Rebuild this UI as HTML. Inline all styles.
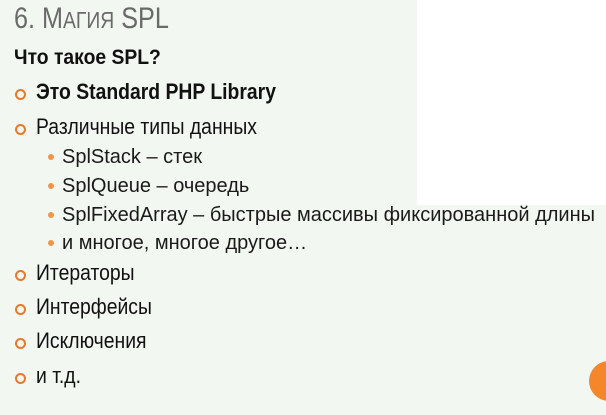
<!DOCTYPE html>
<html><head><meta charset="utf-8"><style>
html,body{margin:0;padding:0}
body{width:606px;height:415px;background:#f3f7f2;position:relative;overflow:hidden;font-family:"Liberation Sans","DejaVu Sans",sans-serif;color:#111}
.w{position:absolute;left:417px;top:0;width:189px;height:205px;background:#fff}
.l{position:absolute;white-space:nowrap;line-height:1;transform-origin:0 50%}
.t{left:14px;top:4px;font-size:30px;color:#6a6a6a;transform:scaleX(0.84)}
.t small{font-size:23px}
.h{left:14px;top:47px;font-size:21px;font-weight:bold;transform:scaleX(0.92)}
.i{left:36px;font-size:22px}
.i span{display:inline-block;transform:scaleX(0.88);transform-origin:0 50%}
.i:before{content:"";position:absolute;left:-21px;top:8px;width:7px;height:7px;border:2px solid #e8782a;border-radius:50%}
.s{left:62px;font-size:20px;color:#1a1a1a}
.s:before{content:"";position:absolute;left:-14px;top:7px;width:6px;height:6px;background:#f0954a;border-radius:50%}
.c{position:absolute;left:589px;top:361px;width:40px;height:40px;border-radius:50%;background:#f6862a}
</style></head><body>
<div class="w"></div>
<div class="l t">6. М<small>АГИЯ</small> SPL</div>
<div class="l h">Что такое SPL?</div>
<div class="l i" style="top:81px;font-weight:bold"><span>Это Standard PHP Library</span></div>
<div class="l i" style="top:116px"><span>Различные типы данных</span></div>
<div class="l s" style="top:147px">SplStack – стек</div>
<div class="l s" style="top:176px">SplQueue – очередь</div>
<div class="l s" style="top:205px">SplFixedArray – быстрые массивы фиксированной длины</div>
<div class="l s" style="top:233px">и многое, многое другое…</div>
<div class="l i" style="top:262px"><span>Итераторы</span></div>
<div class="l i" style="top:296px"><span>Интерфейсы</span></div>
<div class="l i" style="top:330px"><span>Исключения</span></div>
<div class="l i" style="top:365px"><span>и т.д.</span></div>
<div class="c"></div>
</body></html>
